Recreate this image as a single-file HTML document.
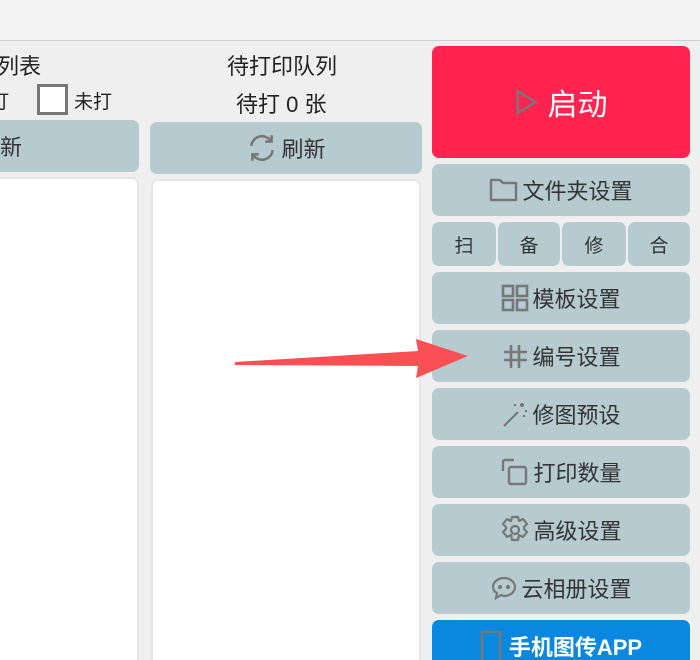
<!DOCTYPE html>
<html><head><meta charset="utf-8"><style>
*{margin:0;padding:0;box-sizing:border-box}
html,body{width:700px;height:660px;overflow:hidden}
body{background:#efefef;font-family:"Liberation Sans","Noto Sans CJK SC",sans-serif;color:#333;position:relative}
.top{position:absolute;left:0;top:0;width:700px;height:41px;background:#f4f4f4;border-bottom:1px solid #cfcfcf}
.a{position:absolute}
.btn{position:absolute;background:#b6cbd0;border-radius:7px;display:flex;align-items:center;justify-content:center;font-size:22px;color:#333}
.btn svg{margin-right:3px}
.panel{position:absolute;background:#fff;border:2px solid #e6e6e6;border-radius:7px}
.t{position:absolute;font-size:22px;color:#222;white-space:nowrap}
</style></head><body>
<div class="top"></div>
<div class="t" style="left:-3px;top:49px">列表</div>
<div class="t" style="left:-10px;top:87px;font-size:19px">打</div>
<div class="a" style="left:37px;top:84px;width:31px;height:31px;border:3px solid #777;background:#fff"></div>
<div class="t" style="left:74px;top:87px;font-size:19px">未打</div>
<div class="btn" style="left:-10px;top:120px;width:149px;height:52px;justify-content:flex-start;padding-left:10px">新</div>
<div class="panel" style="left:-10px;top:177px;width:149px;height:500px"></div>

<div class="t" style="left:227px;top:49px">待打印队列</div>
<div class="t" style="left:236px;top:87px">待打 0 张</div>
<div class="btn" style="left:150px;top:122px;width:272px;height:52px"><svg width="32" height="30" viewBox="0 0 30 28" fill="none" stroke="#777" stroke-width="2.4"><path d="M5 12a10 10 0 0 1 18-5"/><path d="M25 16a10 10 0 0 1-18 5"/><path d="M24 2v6h-6" /><path d="M6 26v-6h6"/></svg>刷新</div>
<div class="panel" style="left:151px;top:179px;width:270px;height:500px"></div>

<div class="btn" style="left:432px;top:46px;width:258px;height:112px;background:#ff2450;color:#fff;font-size:30px"><svg width="24" height="30" viewBox="0 0 26 30" fill="none" stroke="#777" stroke-width="2.6"><path d="M3 3v24L22 15z"/></svg><span style="margin-left:6px">启动</span></div>
<div class="btn" style="left:432px;top:164px;width:258px;height:52px"><svg width="30" height="28" viewBox="0 0 30 28" fill="none" stroke="#777" stroke-width="2.4"><path d="M2 4h9l3 3h13v17H2z" stroke-linejoin="round"/></svg>文件夹设置</div>
<div class="btn" style="left:432px;top:222px;width:64px;height:44px;font-size:19px">扫</div>
<div class="btn" style="left:498px;top:222px;width:62px;height:44px;font-size:19px">备</div>
<div class="btn" style="left:562px;top:222px;width:64px;height:44px;font-size:19px">修</div>
<div class="btn" style="left:628px;top:222px;width:62px;height:44px;font-size:19px">合</div>
<div class="btn" style="left:432px;top:272px;width:258px;height:52px"><svg width="28" height="28" viewBox="0 0 28 28" fill="none" stroke="#777" stroke-width="2.6"><rect x="2" y="2" width="10" height="10"/><rect x="16" y="2" width="10" height="10"/><rect x="2" y="16" width="10" height="10"/><rect x="16" y="16" width="10" height="10"/></svg>模板设置</div>
<div class="btn" style="left:432px;top:330px;width:258px;height:52px"><svg width="28" height="28" viewBox="0 0 28 28" fill="none" stroke="#777" stroke-width="2.6"><path d="M10 3v23M18 3v23M3 10h23M3 18h23"/></svg>编号设置</div>
<div class="btn" style="left:432px;top:388px;width:258px;height:52px"><svg width="28" height="28" viewBox="0 0 28 28" fill="none" stroke="#777" stroke-width="2.2"><path d="M3 26L17 12"/><path d="M21 3v4M19 5h4M25 10v2M14 4v2M23 15v2"/></svg>修图预设</div>
<div class="btn" style="left:432px;top:446px;width:258px;height:52px"><svg width="30" height="30" viewBox="0 0 30 30" fill="none" stroke="#777" stroke-width="2.4"><path d="M14 3H5a2 2 0 0 0-2 2v9"/><rect x="9" y="10" width="17" height="17" rx="2"/></svg>打印数量</div>
<div class="btn" style="left:432px;top:504px;width:258px;height:52px"><svg width="30" height="30" viewBox="0 0 30 30" fill="none" stroke="#777" stroke-width="2.2"><path d="M12 2h6l1 4 4-2 4 5-3 3v2l3 3-4 5-4-2-1 5h-6l-1-5-4 2-4-5 3-3v-2l-3-3 4-5 4 2z" stroke-linejoin="round"/><circle cx="15" cy="15" r="4"/></svg>高级设置</div>
<div class="btn" style="left:432px;top:562px;width:258px;height:52px"><svg width="28" height="28" viewBox="0 0 28 28" fill="none" stroke="#777" stroke-width="2.2"><path d="M14 4C8 4 3 8 3 13c0 3 2 5 4 6l-1 5 5-3c1 0 2 1 3 1 6 0 11-4 11-9S20 4 14 4z"/><circle cx="10" cy="13" r="1" fill="#777"/><circle cx="18" cy="13" r="1" fill="#777"/></svg>云相册设置</div>
<div class="btn" style="left:432px;top:620px;width:258px;height:52px;background:#0a87de;color:#fff;font-weight:bold;align-items:flex-start;padding-top:10px"><svg width="22" height="32" viewBox="0 0 22 32" fill="none" stroke="#777" stroke-width="2.4"><rect x="2" y="2" width="18" height="40"/></svg><span style="margin-left:4px">手机图传APP</span></div>

<svg class="a" style="left:0;top:0" width="700" height="660"><path d="M235 362 L418 351 L416 339 L468 356 L416 378 L418 366 L235 365 Z" fill="#fa5053"/></svg>
</body></html>
